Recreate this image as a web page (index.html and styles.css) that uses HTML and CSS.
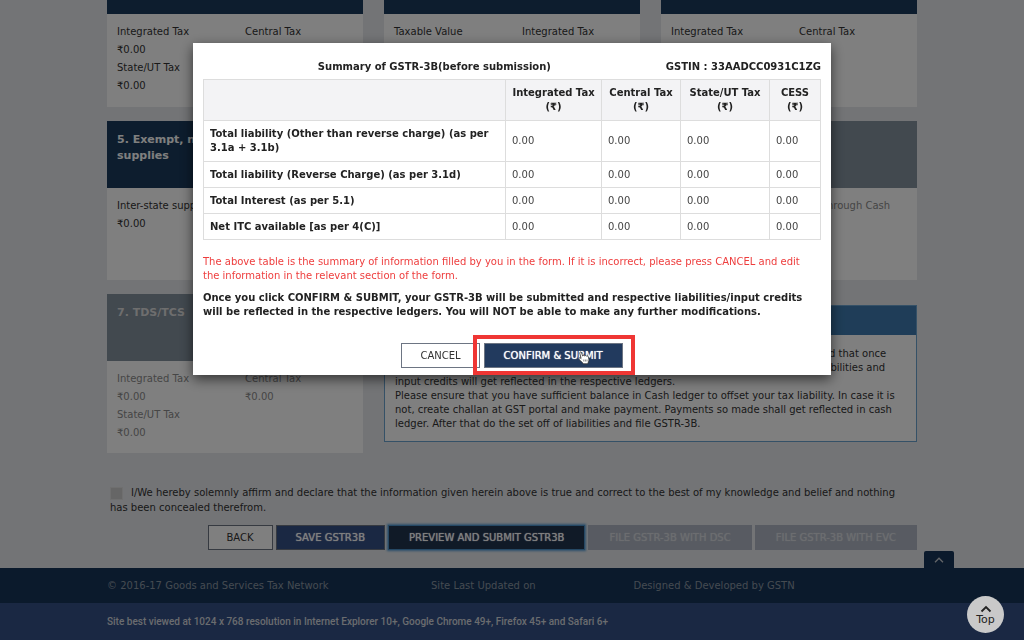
FILE: index.html
```html
<!DOCTYPE html>
<html lang="en">
<head>
<meta charset="utf-8">
<title>GSTR-3B</title>
<link rel="stylesheet" href="styles.css">
</head>
<body>
<div class="page">
  <main class="content">
    <div class="cards">
      <section class="card card-cut">
        <h2 class="card-head"></h2>
        <dl class="card-body">
          <div><dt>Integrated Tax</dt><dd>₹0.00</dd></div>
          <div><dt>Central Tax</dt></div>
          <div><dt>State/UT Tax</dt><dd>₹0.00</dd></div>
        </dl>
      </section>
      <section class="card card-cut">
        <h2 class="card-head"></h2>
        <dl class="card-body">
          <div><dt>Taxable Value</dt></div>
          <div><dt>Integrated Tax</dt></div>
        </dl>
      </section>
      <section class="card card-cut">
        <h2 class="card-head"></h2>
        <dl class="card-body">
          <div><dt>Integrated Tax</dt></div>
          <div><dt>Central Tax</dt></div>
        </dl>
      </section>
      <section class="card">
        <h2 class="card-head">5. Exempt, nil and Non GST<br>supplies</h2>
        <dl class="card-body">
          <div><dt>Inter-state supplies</dt><dd>₹0.00</dd></div>
        </dl>
      </section>
      <section class="card">
        <h2 class="card-head"></h2>
        <dl class="card-body"></dl>
      </section>
      <section class="card card-off">
        <h2 class="card-head"></h2>
        <dl class="card-body">
          <div></div>
          <div><dt>Paid through Cash</dt></div>
        </dl>
      </section>
      <section class="card card-off">
        <h2 class="card-head">7. TDS/TCS</h2>
        <dl class="card-body">
          <div><dt>Integrated Tax</dt><dd>₹0.00</dd></div>
          <div><dt>Central Tax</dt><dd>₹0.00</dd></div>
          <div><dt>State/UT Tax</dt><dd>₹0.00</dd></div>
        </dl>
      </section>
      <section class="notice">
        <h2 class="notice-head"></h2>
        <div class="notice-body">
          <p>Please check the summary of liabilities and credits with due care. You are now informed that once<br>you confirm and submit the form no further change can be made to it, and then the liabilities and<br>input credits will get reflected in the respective ledgers.</p>
          <p>Please ensure that you have sufficient balance in Cash ledger to offset your tax liability. In case it is not, create challan at GST portal and make payment. Payments so made shall get reflected in cash ledger. After that do the set off of liabilities and file GSTR-3B.</p>
        </div>
      </section>
    </div>
    <label class="declare"><input type="checkbox" class="check" disabled>I/We hereby solemnly affirm and declare that the information given herein above is true and correct to the best of my knowledge and belief and nothing has been concealed therefrom.</label>
    <div class="actions">
      <button class="btn btn-plain">BACK</button>
      <button class="btn btn-save">SAVE GSTR3B</button>
      <button class="btn btn-preview">PREVIEW AND SUBMIT GSTR3B</button>
      <button class="btn btn-off" disabled>FILE GSTR-3B WITH DSC</button>
      <button class="btn btn-off" disabled>FILE GSTR-3B WITH EVC</button>
    </div>
  </main>
  <footer class="footer">
    <button class="tab" aria-label="Collapse footer"><svg width="10" height="6" viewBox="0 0 10 6"><path d="M1 5.200 5 1.200 9 5.200" fill="none" stroke="#c8ccd2" stroke-width="1.300"/></svg></button>
    <div class="footer-top"><div class="wrap footer-cols"><span>© 2016-17 Goods and Services Tax Network</span><span>Site Last Updated on</span><span>Designed &amp; Developed by GSTN</span></div></div>
    <div class="footer-base"><div class="wrap">Site best viewed at 1024 x 768 resolution in Internet Explorer 10+, Google Chrome 49+, Firefox 45+ and Safari 6+</div></div>
  </footer>
</div>
<div class="overlay">
  <div class="modal" role="dialog" aria-modal="true" aria-labelledby="summary-title">
    <header class="modal-head"><h1 id="summary-title" class="modal-title">Summary of GSTR-3B(before submission)</h1><span>GSTIN : 33AADCC0931C1ZG</span></header>
    <table class="summary">
      <colgroup><col class="c-label"><col class="c-int"><col class="c-cen"><col class="c-state"><col class="c-cess"></colgroup>
      <thead><tr><td></td><th>Integrated Tax<br>(₹)</th><th>Central Tax<br>(₹)</th><th>State/UT Tax<br>(₹)</th><th>CESS<br>(₹)</th></tr></thead>
      <tbody>
        <tr class="tall"><th>Total liability (Other than reverse charge) (as per<br>3.1a + 3.1b)</th><td>0.00</td><td>0.00</td><td>0.00</td><td>0.00</td></tr>
        <tr><th>Total liability (Reverse Charge) (as per 3.1d)</th><td>0.00</td><td>0.00</td><td>0.00</td><td>0.00</td></tr>
        <tr><th>Total Interest (as per 5.1)</th><td>0.00</td><td>0.00</td><td>0.00</td><td>0.00</td></tr>
        <tr><th>Net ITC available [as per 4(C)]</th><td>0.00</td><td>0.00</td><td>0.00</td><td>0.00</td></tr>
      </tbody>
    </table>
    <p class="warn">The above table is the summary of information filled by you in the form. If it is incorrect, please press CANCEL and edit<br>the information in the relevant section of the form.</p>
    <p class="final">Once you click CONFIRM &amp; SUBMIT, your GSTR-3B will be submitted and respective liabilities/input credits<br>will be reflected in the respective ledgers. You will NOT be able to make any further modifications.</p>
    <div class="modal-actions">
      <button class="btn btn-cancel">CANCEL</button>
      <div class="marked">
        <button class="btn btn-confirm">CONFIRM &amp; SUBMIT</button>
        <svg class="pointer" width="12" height="14" viewBox="0 0 12 14"><path d="M3 7 1.800 2.200C1.500.8 3.200.5 3.600 1.800L4.600 5C5.200 4.200 6.200 4.300 6.600 5 7.200 4.300 8.200 4.500 8.600 5.200 9.400 4.800 10.300 5.200 10.500 6.200L11 9C11 10.500 10 11.200 9.700 12.800H5.300C4.400 11 2.500 10 1 8.300.3 7.200 1.700 6.200 2.600 7.200L3.600 8.200" fill="#fff" stroke="#333" stroke-width=".8"/><path d="M5.800 8.500v2M7.400 8.500v2M9 8.500v2" stroke="#555" stroke-width=".7"/></svg>
      </div>
    </div>
  </div>
</div>
<button class="top"><svg width="12" height="8" viewBox="0 0 12 8"><path d="M1.500 6.500 6 2 10.500 6.500" fill="none" stroke="#222" stroke-width="1.800"/></svg>Top</button>
</body>
</html>
```
FILE: styles.css
```css
* { box-sizing: border-box; }
body {
  margin: 0;
  font: 10px/14px "DejaVu Sans", Verdana, sans-serif;
  color: #333;
}
h1, h2, p, dl, dd { margin: 0; font-size: inherit; }
button { font: inherit; cursor: pointer; }

.page {
  min-height: 100vh;
  display: flex;
  flex-direction: column;
  background: #e6e8ec;
}
.wrap, .content {
  width: calc(100% - 40px);
  max-width: 810px;
  margin: 0 auto;
}
.content { flex: 1; padding-bottom: 18px; }

.cards {
  display: grid;
  grid-template-columns: repeat(3, 1fr);
  gap: 14px 21px;
}
.card { display: flex; flex-direction: column; background: #fff; }
.card-head {
  height: 67px;
  padding: 11px 10px;
  background: #1a3a5c;
  color: #fff;
  font-size: 11px;
  line-height: 16px;
  white-space: nowrap;
  overflow: hidden;
}
.card-cut .card-head { height: 14px; padding: 0; }
.card-body {
  min-height: 92px;
  padding: 9px 10px 11px;
  display: grid;
  grid-template-columns: 128px 1fr;
  align-content: start;
  line-height: 18px;
  white-space: nowrap;
}
.card-cut .card-body { min-height: 93px; }
.card-off .card-head { background: #84929f; color: #dcdcdc; }
.card-off .card-body { color: #8c8c8c; }

.notice {
  grid-column: span 2;
  align-self: start;
  margin-top: 11px;
  border: 1px solid #6ba2cf;
  background: #fff;
}
.notice-head { height: 29px; background: #3e7bb0; }
.notice-body { padding: 12px 10px 10px; }

.declare {
  display: block;
  margin-top: 32px;
  padding: 0 3px;
  line-height: 15px;
}
.check {
  appearance: none;
  width: 13px;
  height: 13px;
  margin: 0 8px 0 0;
  border: 1px solid #dedede;
  background: #ccc;
  vertical-align: middle;
}
.actions {
  display: flex;
  justify-content: flex-end;
  gap: 3px;
  margin-top: 10px;
}
.btn {
  height: 25px;
  padding: 0 19px;
  border: 1px solid #6d7583;
  color: #fff;
  font: 10px/14px "DejaVu Sans", Verdana, sans-serif;
  text-shadow: 0 0 1px currentColor;
  white-space: nowrap;
}
.btn-plain, .btn-cancel {
  padding: 0 18px;
  background: #fff;
  color: #333;
  text-shadow: none;
}
.btn-save { background: #345086; }
.btn-preview { padding: 0 20px; background: #20344f; border-color: #4a90c8; box-shadow: 0 0 2px 1px #5aa0d8; }
.btn-off { padding: 0 20px; background: #b0b7c4; border-color: #b0b7c4; color: #d8dbe0; }

.footer { position: relative; color: #8a96a3; }
.tab {
  position: absolute;
  right: 70px;
  bottom: 100%;
  width: 30px;
  height: 17px;
  padding: 0;
  border: 0;
  border-radius: 2px 2px 0 0;
  background: #163458;
}
.tab svg { display: block; margin: 0 auto; }
.footer-top { padding: 11px 0 10px; background: #163458; }
.footer-cols { display: grid; grid-template-columns: 40% 25% 35%; }
.footer-base {
  padding: 12px 0 11px;
  background: #345086;
  color: #d4d8de;
  font-family: Roboto, sans-serif;
  font-weight: 500;
}

.overlay {
  position: fixed;
  inset: 0;
  padding: 43px 20px;
  background: rgba(0, 0, 0, .5);
}
.modal {
  max-width: 638px;
  margin: 0 auto;
  padding: 17px 10px 7px;
  background: #fff;
  box-shadow: 0 4px 12px rgba(0, 0, 0, .6);
  color: #222;
}
.modal-head { display: flex; font-weight: bold; }
.modal-title { flex: 1; text-align: center; }
.summary {
  width: 100%;
  margin-top: 5px;
  border-collapse: collapse;
  table-layout: fixed;
}
.c-label { width: 302px; }
.c-int { width: 96px; }
.c-cen { width: 79px; }
.c-state { width: 89px; }
.summary th, .summary td {
  padding: 6px 6px 5px;
  border: 1px solid #ddd;
  text-align: left;
  white-space: nowrap;
}
.summary .tall > * { padding-bottom: 6px; }
.summary thead th, .summary thead td {
  padding: 6px 0;
  background: #f3f3f5;
  text-align: center;
}
.summary tbody td { color: #444; }
.warn { margin-top: 15px; color: #ee3d3d; white-space: nowrap; }
.final { margin-top: 8px; font-weight: bold; white-space: nowrap; }
.modal-actions {
  display: flex;
  justify-content: center;
  gap: 4px;
  margin-top: 24px;
}
.marked { position: relative; display: flex; }
.marked::after {
  content: "";
  position: absolute;
  inset: -8px -12px -7px -11px;
  border: 4px solid #ef3634;
  pointer-events: none;
}
.btn-confirm { background: #223a5e; }
.pointer { position: absolute; left: 94px; top: 8px; pointer-events: none; }

.top {
  position: fixed;
  right: 20px;
  bottom: 7px;
  width: 37px;
  height: 37px;
  padding: 3px 0 0;
  display: flex;
  flex-direction: column;
  align-items: center;
  justify-content: center;
  border: 0;
  border-radius: 50%;
  background: #c9c9c9;
  color: #222;
  font-size: 11px;
}
```
